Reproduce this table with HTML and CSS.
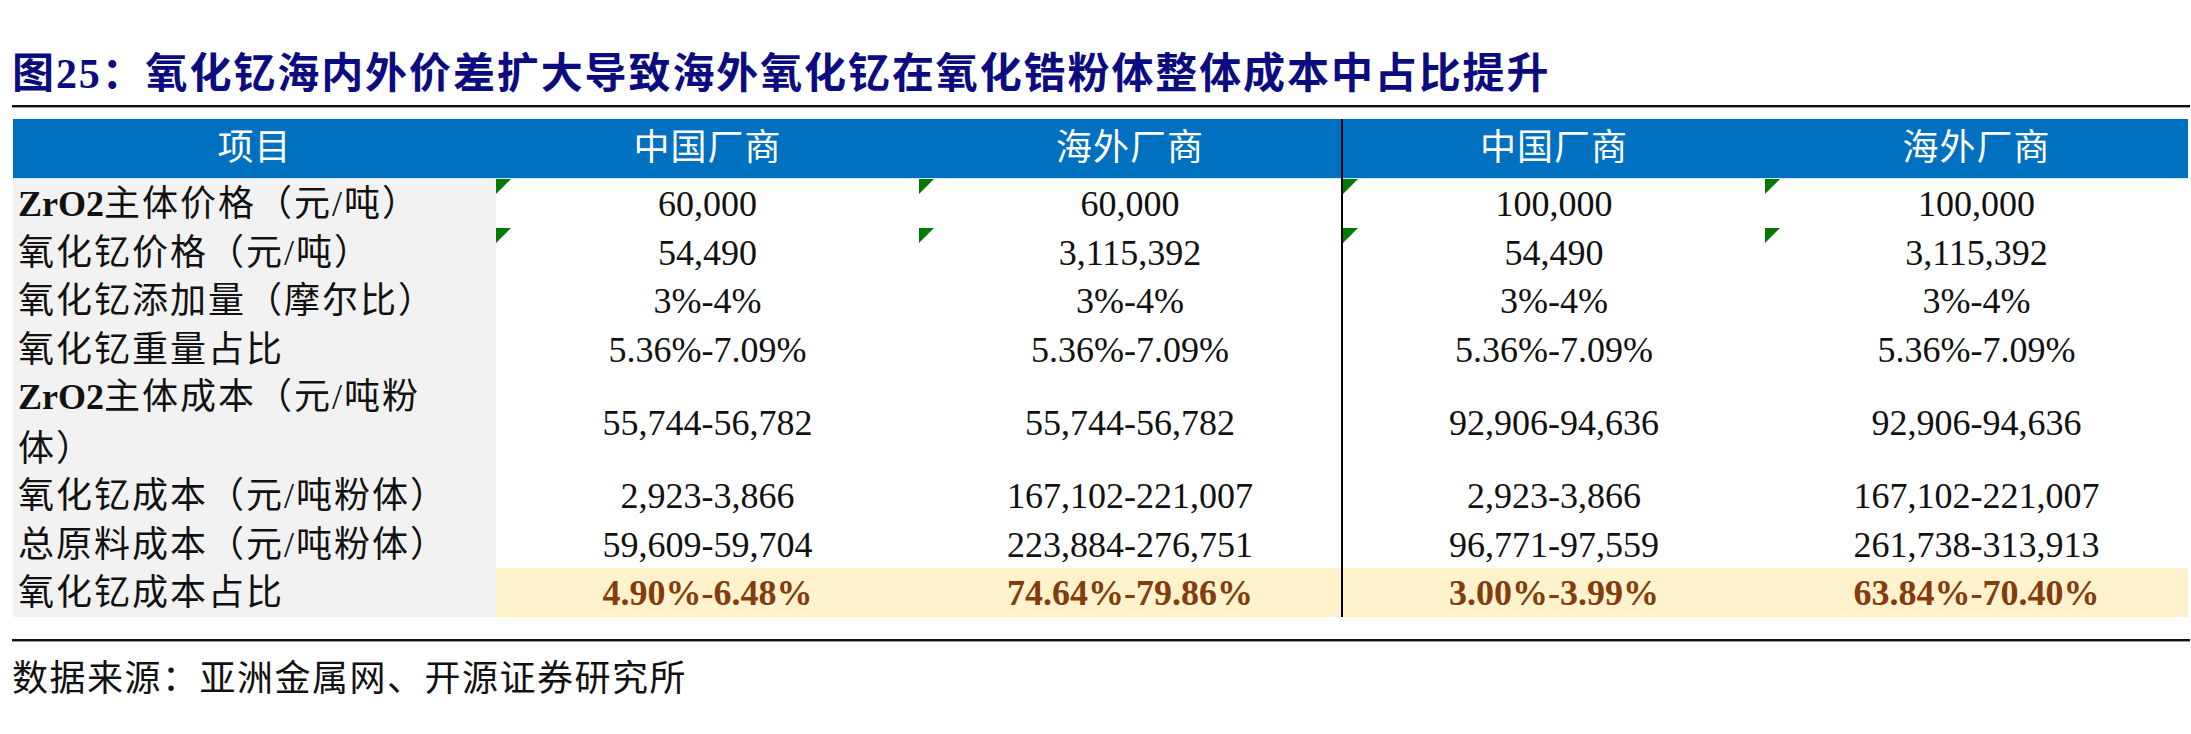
FILE: index.html
```html
<!DOCTYPE html>
<html lang="zh-CN">
<head>
<meta charset="utf-8">
<title>图25</title>
<link rel="stylesheet" href="styles.css">
</head>
<body>
<div class="page">
  <h1 class="title">图25：氧化钇海内外价差扩大导致海外氧化钇在氧化锆粉体整体成本中占比提升</h1>
  <table class="data">
    <colgroup>
      <col class="c-item">
      <col class="c-val">
      <col class="c-val">
      <col class="c-val">
      <col class="c-last">
    </colgroup>
    <thead>
      <tr>
        <th>项目</th>
        <th>中国厂商</th>
        <th>海外厂商</th>
        <th class="split">中国厂商</th>
        <th>海外厂商</th>
      </tr>
    </thead>
    <tbody>
      <tr>
        <td class="item"><b>ZrO2</b>主体价格（元/吨）</td>
        <td class="mark">60,000</td>
        <td class="mark">60,000</td>
        <td class="mark split">100,000</td>
        <td class="mark">100,000</td>
      </tr>
      <tr>
        <td class="item">氧化钇价格（元/吨）</td>
        <td class="mark">54,490</td>
        <td class="mark">3,115,392</td>
        <td class="mark split">54,490</td>
        <td class="mark">3,115,392</td>
      </tr>
      <tr>
        <td class="item">氧化钇添加量（摩尔比）</td>
        <td>3%-4%</td>
        <td>3%-4%</td>
        <td class="split">3%-4%</td>
        <td>3%-4%</td>
      </tr>
      <tr>
        <td class="item">氧化钇重量占比</td>
        <td>5.36%-7.09%</td>
        <td>5.36%-7.09%</td>
        <td class="split">5.36%-7.09%</td>
        <td>5.36%-7.09%</td>
      </tr>
      <tr>
        <td class="item"><div class="wrap"><b>ZrO2</b>主体成本（元/吨粉<br>体）</div></td>
        <td>55,744-56,782</td>
        <td>55,744-56,782</td>
        <td class="split">92,906-94,636</td>
        <td>92,906-94,636</td>
      </tr>
      <tr>
        <td class="item">氧化钇成本（元/吨粉体）</td>
        <td>2,923-3,866</td>
        <td>167,102-221,007</td>
        <td class="split">2,923-3,866</td>
        <td>167,102-221,007</td>
      </tr>
      <tr>
        <td class="item">总原料成本（元/吨粉体）</td>
        <td>59,609-59,704</td>
        <td>223,884-276,751</td>
        <td class="split">96,771-97,559</td>
        <td>261,738-313,913</td>
      </tr>
      <tr class="hl">
        <td class="item">氧化钇成本占比</td>
        <td>4.90%-6.48%</td>
        <td>74.64%-79.86%</td>
        <td class="split">3.00%-3.99%</td>
        <td>63.84%-70.40%</td>
      </tr>
    </tbody>
  </table>
  <div class="source">数据来源：亚洲金属网、开源证券研究所</div>
</div>
</body>
</html>
```
FILE: styles.css
```css
html, body {
  margin: 0;
  padding: 0;
  background: #ffffff;
}

body {
  width: 2191px;
  height: 734px;
  overflow: hidden;
  font-family: "Liberation Serif", "Noto Sans CJK SC", serif;
  color: #111111;
}

.page {
  display: flex;
  flex-direction: column;
  padding-left: 12px;
  width: 2178px;
}

.title {
  margin: 0;
  padding-top: 50px;
  height: 55px;
  font-size: 42px;
  letter-spacing: 1.9px;
  line-height: 48px;
  font-weight: 700;
  color: #0c0c80;
  white-space: nowrap;
  border-bottom: 2px solid #111111;
  box-shadow: 0 1px 0 #9a9a9a;
}

.data {
  margin-top: 12px;
  margin-left: 1px;
  width: 2175px;
  table-layout: fixed;
  border-collapse: collapse;
  border-spacing: 0;
  font-size: 36px;
}

.c-item { width: 483px; }
.c-val { width: 423px; }
.c-last { width: 423px; }

.data th {
  height: 59px;
  padding: 0;
  background: #0070c0;
  color: #ffffff;
  font-weight: 400;
  text-align: center;
  line-height: 59px;
  letter-spacing: 1px;
  border-bottom: 1px solid #d6e4f0;
}

.data td {
  padding: 3px 0 0 0;
  height: 45.5px;
  line-height: 45.5px;
  text-align: center;
  vertical-align: middle;
  background: #ffffff;
  color: #111111;
}

.data td.item {
  background: #f2f2f2;
  text-align: left;
  padding-left: 5px;
  letter-spacing: 2px;
}

.data td.item b {
  font-weight: 700;
  letter-spacing: 0;
}

.data td.item .wrap {
  line-height: 52px;
  margin: -5px 0 -4px 0;
}

.data .split {
  border-left: 2px solid #000000;
}

.data td.mark {
  position: relative;
}

.data td.mark::before {
  content: "";
  position: absolute;
  left: 0;
  top: 0;
  width: 0;
  height: 0;
  border-style: solid;
  border-width: 15px 15px 0 0;
  border-color: #007a00 transparent transparent transparent;
}

.data tr.hl td {
  background: #fff2cc;
  color: #843c0c;
  font-weight: 700;
}

.data tr.hl td.item {
  background: #f2f2f2;
  color: #111111;
  font-weight: 400;
}

.source {
  margin-top: 22px;
  border-top: 2px solid #111111;
  box-shadow: inset 0 1px 0 #9a9a9a;
  padding-top: 14px;
  font-size: 36px;
  letter-spacing: 1.5px;
  line-height: 48px;
  color: #111111;
  white-space: nowrap;
}
```
